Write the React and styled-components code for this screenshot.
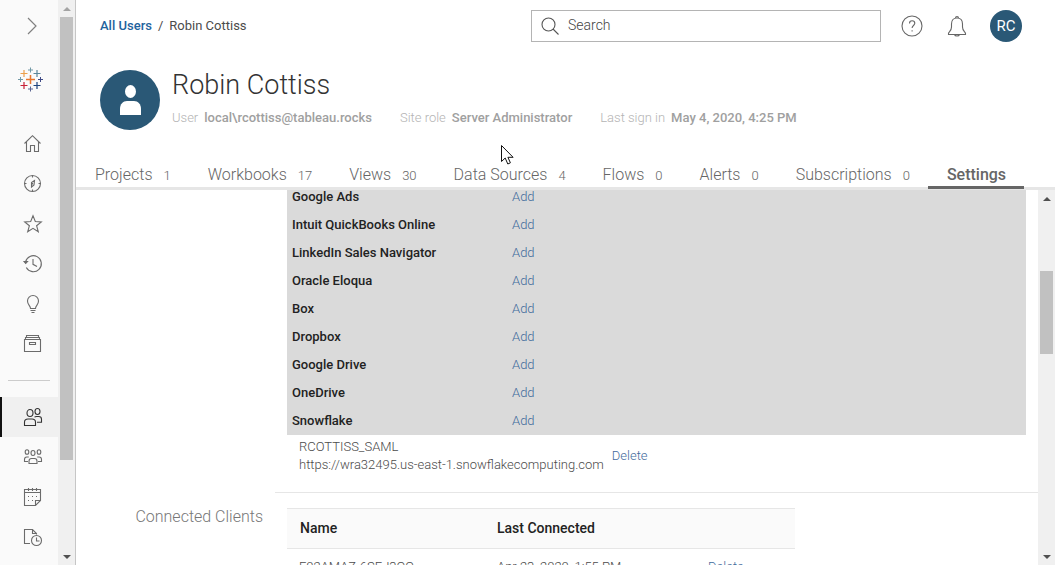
import React from "react";
import styled, { createGlobalStyle, css } from "styled-components";

const Global = createGlobalStyle`
  * { box-sizing: border-box; }
  body { margin: 0; font-family: Roboto, "Liberation Sans", sans-serif; font-size: 13px; font-weight: 300; color: #4b4b4b; background: #fff; }
  button, input { font: inherit; color: inherit; }
  h1, h2, p, dl, dd, ul, ol { margin: 0; padding: 0; font-weight: inherit; }
  ul, ol { list-style: none; }
  a { text-decoration: none; color: #3f6a9c; }
  table { border-collapse: collapse; table-layout: fixed; }
  th, td { padding: 0 0 2px; text-align: left; font-weight: inherit; }
`;

const Shell = styled.div`display: flex; height: 100vh; overflow: hidden;`;
const Sidebar = styled.aside`display: flex; flex: none; border-right: 1px solid #c6c6c6; background: #fafafa;`;
const Nav = styled.nav`width: 58px; overflow: hidden;`;
const Expand = styled.button`display: flex; width: 58px; height: 52px; padding: 0 0 0 5px; align-items: center; justify-content: center; border: 0; background: none;`;
const Brand = styled.a`display: flex; height: 72px; padding: 14px 0 0 17px;`;
const NavLink = styled.a`
  display: flex; height: 40px; align-items: center; padding-left: 23px; color: #6b6b6b;
  ${({ $active }) => $active && css`background: #f0f0f0; box-shadow: inset 2px 0 #111; color: #333;`}
`;
const Divider = styled.hr`height: 1px; margin: 16px 8px; border: 0; background: #ccc;`;

const Track = styled.div`display: flex; flex: none; flex-direction: column; width: 17px; background: #f0f0f0;`;
const ArrowButton = styled.button`display: flex; flex: none; height: 17px; padding: 0; align-items: center; justify-content: center; border: 0; background: none; color: ${({ $dim }) => ($dim ? "#a3a3a3" : "#505050")};`;
const ThumbArea = styled.div`flex: 1; padding-top: ${({ $offset }) => $offset};`;
const Thumb = styled.div`height: ${({ $size }) => $size}; margin: 0 2px; background: #c1c1c1;`;

const Main = styled.main`display: flex; flex: 1; flex-direction: column; min-width: 0;`;
const TopBar = styled.header`display: flex; height: 52px; align-items: center; padding: 0 33px 0 24px;`;
const Crumbs = styled.nav`display: flex; flex: 1; gap: 6px; padding-bottom: 2px; color: #4b4b4b; font-weight: 400; a { color: #1f639d; font-weight: 500; }`;
const SearchBox = styled.label`display: flex; width: 350px; height: 32px; align-items: center; gap: 9px; padding: 0 9px; border: 1px solid #b4b4b4; color: #555;`;
const SearchInput = styled.input`flex: 1; min-width: 0; padding: 0 0 2px; border: 0; outline: 0; background: none; font-size: 14px; &::placeholder { color: #444; opacity: 1; }`;
const IconButton = styled.button`display: flex; padding: 0; margin-left: ${({ $gap }) => $gap}; border: 0; background: none; color: #666;`;
const Account = styled.button`width: 32px; height: 32px; margin-left: 22px; padding: 0; border: 0; border-radius: 50%; background: #2a5876; color: #fff; font-size: 15px; font-weight: 400;`;

const Profile = styled.section`display: flex; gap: 12px; height: 110px; padding: 18px 24px 0;`;
const Avatar = styled.div`display: flex; width: 60px; height: 60px; border-radius: 50%; background: #2a5876; align-items: center; justify-content: center;`;
const Name = styled.h1`font-size: 27px; line-height: 30px; font-weight: 300; color: #333;`;
const Facts = styled.dl`display: flex; gap: 28px; margin-top: 9px; line-height: 18px; white-space: nowrap;`;
const Fact = styled.div`display: flex; gap: 6px; dt { color: #b4b4b4; } dd { color: #a0a0a0; font-weight: 500; }`;

const Tabs = styled.nav`display: flex; height: 28px; flex: none; border-bottom: 3px solid #e6e6e6;`;
const Tab = styled.a`
  display: flex; height: 27px; align-items: center; gap: 11px; padding: 0 18px 2px 19px; font-size: 16px; color: #666; white-space: nowrap;
  small { padding-top: 1px; font-size: 13px; }
  ${({ $active }) => $active && css`border-bottom: 3px solid #666; padding-top: 3px; font-weight: 500;`}
`;

const Body = styled.div`display: flex; flex: 1; min-height: 0;`;
const Content = styled.div`flex: 1; min-width: 0; overflow: hidden;`;
const Section = styled.section`display: flex; ${({ $scrolled }) => $scrolled && "margin-top: -7px;"}`;
const Label = styled.h2`flex: none; width: 199px; padding: 14px 12px 0 0; text-align: right; font-size: 16px; line-height: 20px; color: #777;`;
const Field = styled.div`flex: 1; min-width: 0; padding: ${({ $pad }) => $pad}; border-bottom: 1px solid #e6e6e6;`;
const Sources = styled.table`
  width: 100%; background: #dadada;
  tr { height: 28px; }
  th { width: 225px; padding-left: 5px; font-weight: 500; color: #222; }
`;
const Saved = styled.div`display: flex; align-items: center; gap: 8px; padding: 3px 12px 18px; line-height: 18px;`;
const Clients = styled.table`
  width: 508px;
  th { height: 40px; border: solid #e6e6e6; border-width: 1px 0; background: #fafafa; font-size: 14px; font-weight: 500; color: #222; }
  td { height: 37px; }
  th:first-child { padding-left: 13px; } td:first-child { padding-left: 12px; }
`;
const Cursor = styled.svg`position: absolute; left: 501px; top: 145px; pointer-events: none;`;

const Icon = ({ size = 20, children, sw = 1.1 }) => (
  <svg width={size} height={size} viewBox={`0 0 ${size} ${size}`} fill="none" stroke="currentColor" strokeWidth={sw} aria-hidden="true">{children}</svg>
);

const icons = {
  Home: <><path d="M1.5 9.5 9.5 1.7l8 7.8M3.5 8v9.5h4v-6h4v6h4V8" /></>,
  Explore: <><circle cx="9.5" cy="9.5" r="8" /><path d="M9.5 1.5v2M9.5 15.5v2M1.5 9.5h2M15.5 9.5h2M11.500 6.500 8.500 8.500v4.500l2.500-2zM9.500 9v1.500" /></>,
  Favorites: <path d="m10 1.800 2.300 5.700 6 .4-4.700 3.800 1.700 6-5.300-3.300-5.300 3.300 1.700-6L1.700 7.900l6-.4z" />,
  Recents: <><path d="M2.500 8A8 8 0 1 1 3.300 13.500" /><path d="m1 7.500 1.700 2 1.800-2z" fill="currentColor" /><path d="M10 5v5.300l4 2.200" /></>,
  Recommendations: <path d="M7.500 14.500c0-3-3-3.500-3-7.500a5.500 5.500 0 0 1 11 0c0 4-3 4.500-3 7.500zM7.500 16.500h5M8.500 18.500h3" />,
  Collections: <path d="M1.500 5.500h16v12h-16zM2.500 5.500v-2h14v2M3.500 3.500v-2h12v2M6.500 8.500h6v2h-6z" />,
  Users: <><ellipse cx="7" cy="6" rx="3" ry="3.500" /><ellipse cx="14.500" cy="4.500" rx="2.500" ry="3" /><path d="M1.500 18.500v-3.300c0-2 1.500-3.200 3.500-3.200h4c2 0 3.500 1.200 3.500 3.200v3.300zM11.500 10.200c.6-.5 1.300-.7 2-.7h2.200c1.700 0 2.800 1 2.800 2.700v3h-4.500" /></>,
  Groups: <><ellipse cx="4" cy="5" rx="1.800" ry="2.300" /><ellipse cx="16" cy="5" rx="1.800" ry="2.300" /><ellipse cx="10" cy="6" rx="2" ry="2.500" /><path d="M6 16.500v-2.300c0-1.600 1-2.700 2.500-2.700h3c1.500 0 2.500 1.100 2.500 2.700v2.300zM5 14.500H1.500v-2c0-1.500.8-2.500 2.300-2.500h2M15 14.500h3.500v-2c0-1.500-.8-2.500-2.300-2.500h-2" /></>,
  Schedules: <><path d="M17.500 13.500v-11h-16v16h11zM12.500 18.500v-5h5M1.500 5.500h16M5.500 1v3M9.500 1v3M13.500 1v3" /><path d="M5 9.500h10M5 13.500h6" strokeDasharray="1 3" /></>,
  Jobs: <><path d="M7 16.500H1.500v-14h8l4 4v1M9.500 2.500v4h4" /><circle cx="13.500" cy="13.500" r="5" /><path d="M13.500 10.500v3.500h3" /></>,
};

const plus = (x, y, r, color, sw) => <path key={x + "-" + y} d={`M${x - r} ${y}h${2 * r}M${x} ${y - r}v${2 * r}`} stroke={color} strokeWidth={sw} />;
const Logo = () => (
  <svg width="27" height="27" viewBox="0 0 27 27" role="img" aria-label="Tableau">
    {plus(13.5, 13.5, 4.5, "#e8762c", 1.5)}
    {plus(7, 7.5, 3.5, "#eba04c", 1.2)}
    {plus(20, 7.5, 3.5, "#5b879b", 1.2)}
    {plus(7, 19.5, 3.5, "#c72037", 1.2)}
    {plus(20, 19.5, 3.5, "#1f457e", 1.2)}
    {plus(13.5, 4, 2.5, "#7199a6", 1)}
    {plus(13.5, 23, 2.5, "#5b6591", 1)}
    {plus(3.5, 13.5, 2.5, "#7199a6", 1)}
    {plus(23.5, 13.5, 2.5, "#3f4a86", 1)}
  </svg>
);

const Scrollbar = ({ offset, size, atTop }) => (
  <Track>
    <ArrowButton $dim={atTop} aria-label="Scroll up"><svg width="8" height="4"><path d="M0 4 4 0l4 4z" fill="currentColor" /></svg></ArrowButton>
    <ThumbArea $offset={offset}><Thumb $size={size} /></ThumbArea>
    <ArrowButton aria-label="Scroll down"><svg width="8" height="4"><path d="m0 0 4 4 4-4z" fill="currentColor" /></svg></ArrowButton>
  </Track>
);

const mainLinks = ["Home", "Explore", "Favorites", "Recents", "Recommendations", "Collections"];
const adminLinks = ["Users", "Groups", "Schedules", "Jobs"];
const tabs = [["Projects", 1], ["Workbooks", 17], ["Views", 30], ["Data Sources", 4], ["Flows", 0], ["Alerts", 0], ["Subscriptions", 0], ["Settings"]];
const facts = [["User", "local\\rcottiss@tableau.rocks"], ["Site role", "Server Administrator"], ["Last sign in", "May 4, 2020, 4:25 PM"]];
const sources = ["Google Ads", "Intuit QuickBooks Online", "LinkedIn Sales Navigator", "Oracle Eloqua", "Box", "Dropbox", "Google Drive", "OneDrive", "Snowflake"];

const SideLink = ({ name, active }) => (
  <li><NavLink href="#" $active={active} aria-label={name}><Icon>{icons[name]}</Icon></NavLink></li>
);

export default function App() {
  return (
    <Shell>
      <Global />
      <Sidebar>
        <Nav aria-label="Site">
          <Expand aria-label="Expand"><svg width="10" height="18" fill="none" stroke="#808080" strokeWidth="1.2"><path d="m1 1 8 8-8 8" /></svg></Expand>
          <Brand href="#"><Logo /></Brand>
          <ul>{mainLinks.map((n) => <SideLink key={n} name={n} />)}</ul>
          <Divider />
          <ul>{adminLinks.map((n) => <SideLink key={n} name={n} active={n === "Users"} />)}</ul>
        </Nav>
        <Scrollbar atTop offset="0" size="443px" />
      </Sidebar>
      <Main>
        <TopBar>
          <Crumbs aria-label="Breadcrumb"><a href="#">All Users</a><span>/</span><span>Robin Cottiss</span></Crumbs>
          <SearchBox>
            <Icon size={18} sw={1.1}><circle cx="7.5" cy="7.5" r="6.500" /><path d="m12 12 5.500 5.500" /></Icon>
            <SearchInput type="search" placeholder="Search" aria-label="Search" />
          </SearchBox>
          <IconButton $gap="20px" aria-label="Help"><Icon size={22}><circle cx="11" cy="11" r="10" /><path d="M8.500 8.500c0-1.700 1.100-2.700 2.600-2.700s2.700 1 2.700 2.500c0 2.200-2.700 2.200-2.700 4.700M11.100 15.200v1.400" /></Icon></IconButton>
          <IconButton $gap="23px" aria-label="Notifications"><Icon size={22}><path d="M2.500 19.500v-1c0-1.500 3-2.200 3-6.500V9c0-3.500 2-6 5.500-6s5.500 2.500 5.500 6v3c0 4.300 3 5 3 6.500v1zM9.500 3c0-2 3-2 3 0M8.500 19.500c.5 2 4.500 2 5 0" /></Icon></IconButton>
          <Account>RC</Account>
        </TopBar>
        <Profile>
          <Avatar><svg width="22" height="30" fill="#fff" aria-hidden="true"><ellipse cx="11.500" cy="6.500" rx="5.500" ry="6.500" /><path d="M1 30v-6c0-5 3-8 7-8h7c4 0 7 3 7 8v6z" /></svg></Avatar>
          <div>
            <Name>Robin Cottiss</Name>
            <Facts>{facts.map(([k, v]) => <Fact key={k}><dt>{k}</dt><dd>{v}</dd></Fact>)}</Facts>
          </div>
        </Profile>
        <Tabs aria-label="User content">
          {tabs.map(([n, c]) => <Tab key={n} href="#" $active={n === "Settings"}>{n}{c !== undefined && <small>{c}</small>}</Tab>)}
        </Tabs>
        <Body>
          <Content>
            <Section $scrolled>
              <Label as="div" />
              <Field $pad="0 12px">
                <Sources><tbody>{sources.map((s) => <tr key={s}><th scope="row">{s}</th><td><a href="#">Add</a></td></tr>)}</tbody></Sources>
                <Saved><div><p>RCOTTISS_SAML</p><p>https://wra32495.us-east-1.snowflakecomputing.com</p></div><a href="#">Delete</a></Saved>
              </Field>
            </Section>
            <Section>
              <Label>Connected Clients</Label>
              <Field $pad="15px 12px">
                <Clients>
                  <colgroup><col width="210" /><col width="211" /><col /></colgroup>
                  <thead><tr><th>Name</th><th>Last Connected</th><th aria-label="Actions" /></tr></thead>
                  <tbody><tr><td>F02AMAZ-6SEJ3QQ</td><td>Apr 23, 2020, 1:55 PM</td><td><a href="#">Delete</a></td></tr></tbody>
                </Clients>
              </Field>
            </Section>
          </Content>
          <Scrollbar offset="64px" size="83px" />
        </Body>
      </Main>
      <Cursor width="13" height="20" viewBox="0 0 13 20" aria-hidden="true"><path d="M.5.500v16l3.700-3.500 2.600 6 2.600-1.200-2.500-5.500h5.200z" fill="#fff" stroke="#111" /></Cursor>
    </Shell>
  );
}
